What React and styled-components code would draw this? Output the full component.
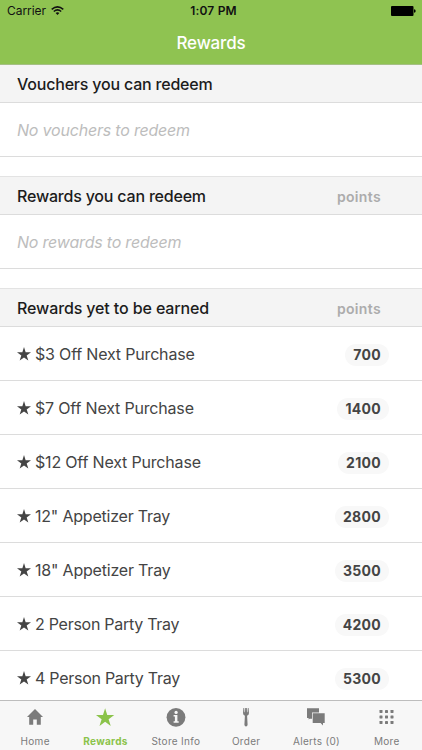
import styled, { createGlobalStyle } from "styled-components";

const GlobalStyle = createGlobalStyle`
  * {
    box-sizing: border-box;
  }

  body {
    margin: 0;
    overflow: hidden;
    background: #fff;
    font-family: Inter, "Liberation Sans", sans-serif;
  }
`;

const Screen = styled.div`
  display: flex;
  flex-direction: column;
  width: 422px;
  height: 750px;
  overflow: hidden;
  background: #fff;
`;

const Header = styled.header`
  flex: none;
  height: 65px;
  background: #8fc351;
  border-bottom: 1px solid #a5bf84;
`;

const StatusBar = styled.div`
  display: grid;
  grid-template-columns: 1fr auto 1fr;
  align-items: center;
  height: 22px;
  padding: 0 6px 0 7px;
  color: #111;
  font-size: 12px;
  line-height: 22px;
`;

const Carrier = styled.div`
  display: flex;
  align-items: center;
  gap: 5px;
  letter-spacing: -0.05px;
`;

const Clock = styled.div`
  padding-left: 4px;
  font-weight: 600;
  letter-spacing: 0.2px;
`;

const Battery = styled.svg`
  justify-self: end;
`;

const Title = styled.h1`
  margin: 0;
  color: #fff;
  font-size: 17px;
  font-weight: 500;
  line-height: 43px;
  letter-spacing: -0.15px;
  text-align: center;
`;

const Content = styled.main`
  flex: 1;
  min-height: 0;
  overflow: hidden;
`;

const Section = styled.section`
  margin-bottom: 19px;
`;

const SectionHead = styled.div`
  display: flex;
  align-items: center;
  justify-content: space-between;
  height: ${({ $first }) => ($first ? 38 : 39)}px;
  padding: 0 41px 0 17px;
  background: #f4f4f4;
  border-top: ${({ $first }) => ($first ? "none" : "1px solid #e3e3e3")};
  border-bottom: 1px solid #dcdcdc;
`;

const SectionTitle = styled.h2`
  margin: 0;
  color: #1c1c1c;
  font-size: 16px;
  font-weight: 500;
  letter-spacing: ${({ $spacing }) => $spacing || -0.2}px;
`;

const PointsLabel = styled.span`
  padding-top: 2px;
  color: #acacac;
  font-size: 14px;
  font-weight: 600;
  letter-spacing: 0.35px;
`;

const Row = styled.div`
  display: flex;
  align-items: center;
  height: 54px;
  padding: 0 33px 0 17px;
  border-bottom: 1px solid #dcdcdc;
  color: #444;
  font-size: 16px;
`;

const Empty = styled.span`
  color: #bdbdbd;
  font-style: italic;
  letter-spacing: -0.2px;
`;

const RewardStar = styled.svg`
  flex: none;
  margin-right: 4px;
  fill: #444;
`;

const RewardName = styled.span`
  flex: 1;
  letter-spacing: ${({ $spacing }) => $spacing || -0.18}px;
`;

const Points = styled.span`
  height: 22px;
  margin-top: 2px;
  padding: 0 8px;
  border-radius: 11px;
  background: #f8f8f8;
  color: #444;
  font-size: 14px;
  font-weight: 700;
  line-height: 22px;
  letter-spacing: 0.3px;
`;

const TabBar = styled.nav`
  display: grid;
  flex: none;
  grid-template-columns: repeat(6, 1fr);
  height: 50px;
  background: #f7f7f7;
  border-top: 1px solid #bdbdbd;
`;

const Tab = styled.a`
  display: flex;
  flex-direction: column;
  align-items: center;
  padding-top: 5px;
  color: ${({ $active }) => ($active ? "#8bc34a" : "#7b7b7b")};
  font-size: 10px;
  font-weight: ${({ $active }) => ($active ? 700 : 400)};
  line-height: 14px;
  letter-spacing: 0.3px;
  white-space: nowrap;
`;

const TabIcon = styled.svg`
  display: block;
  margin-bottom: 6px;
  fill: currentColor;
`;

const STAR =
  "M12 0 L14.8 8.9 H24 L16.6 14.4 L19.4 23.2 L12 17.8 L4.6 23.2 L7.4 14.4 L0 8.9 H9.2 Z";

const rewards = [
  { name: "$3 Off Next Purchase", points: 700 },
  { name: "$7 Off Next Purchase", points: 1400 },
  { name: "$12 Off Next Purchase", points: 2100 },
  { name: '12" Appetizer Tray', points: 2800, spacing: -0.21 },
  { name: '18" Appetizer Tray', points: 3500, spacing: -0.2 },
  { name: "2 Person Party Tray", points: 4200, spacing: -0.27 },
  { name: "4 Person Party Tray", points: 5300, spacing: -0.27 },
];

const tabs = [
  {
    label: "Home",
    icon: <path d="M11 3 L19 11 H16.8 V18.8 H12.8 V13.6 H9.2 V18.8 H5.2 V11 H3 Z" />,
  },
  {
    label: "Rewards",
    active: true,
    icon: <path d={STAR} transform="translate(2 2.3) scale(0.76)" />,
  },
  {
    label: "Store Info",
    icon: (
      <>
        <circle cx="11" cy="11.3" r="9.4" />
        <circle cx="11.1" cy="6.4" r="1.6" fill="#f7f7f7" />
        <path d="M8.6 9.1 H12.4 V15.3 H13.7 V16.7 H8.6 V15.3 H9.9 V10.5 H8.6 Z" fill="#f7f7f7" />
      </>
    ),
  },
  {
    label: "Order",
    icon: (
      <path d="M8.4 2 H9.2 L9.5 6.2 H10 L10.2 2 H11.8 L12 6.2 H12.5 L12.8 2 H13.6 L14 7 Q14 9 12.1 9.8 L12.6 18.8 Q12.4 20.4 11 20.4 Q9.6 20.4 9.4 18.8 L9.9 9.8 Q8 9 8 7 Z" />
    ),
  },
  {
    label: "Alerts (0)",
    icon: (
      <>
        <path d="M2 2.2 H14 V6.5 H7 V12.8 H4.6 L3.6 13.4 V12 H2 Z" />
        <path d="M7.7 7.3 H19.7 V17 H18 V19.4 L15.6 17 H7.7 Z" />
      </>
    ),
  },
  {
    label: "More",
    icon: [4, 9.5, 15].map((y) =>
      [4, 9.5, 15].map((x) => (
        <rect key={`${x}-${y}`} x={x - 0.5} y={y} width="3" height="3" rx="0.4" />
      ))
    ),
  },
];

export default function App() {
  return (
    <Screen>
      <GlobalStyle />
      <Header>
        <StatusBar>
          <Carrier>
            Carrier
            <svg width="13" height="10" viewBox="0 0 13 10" fill="none" stroke="#111">
              <path d="M0.7 3.4 Q6.5 -1.7 12.3 3.4" strokeWidth="1.5" />
              <path d="M2.8 5.5 Q6.5 2.3 10.2 5.5" strokeWidth="1.5" />
              <path d="M4.6 7 Q6.5 5.5 8.4 7 L6.5 9.1 Z" fill="#111" stroke="none" />
            </svg>
          </Carrier>
          <Clock>1:07 PM</Clock>
          <Battery width="25" height="10" viewBox="0 0 25 10">
            <rect width="22.5" height="10" rx="1" />
            <path d="M23 3.3 Q24.7 3.5 24.7 5 Q24.7 6.5 23 6.7 Z" />
          </Battery>
        </StatusBar>
        <Title>Rewards</Title>
      </Header>

      <Content>
        <Section>
          <SectionHead $first>
            <SectionTitle>Vouchers you can redeem</SectionTitle>
          </SectionHead>
          <Row>
            <Empty>No vouchers to redeem</Empty>
          </Row>
        </Section>

        <Section>
          <SectionHead>
            <SectionTitle>Rewards you can redeem</SectionTitle>
            <PointsLabel>points</PointsLabel>
          </SectionHead>
          <Row>
            <Empty>No rewards to redeem</Empty>
          </Row>
        </Section>

        <Section>
          <SectionHead>
            <SectionTitle $spacing={-0.12}>Rewards yet to be earned</SectionTitle>
            <PointsLabel>points</PointsLabel>
          </SectionHead>
          {rewards.map((reward) => (
            <Row key={reward.name}>
              <RewardStar width="14" height="14" viewBox="0 0 24 24">
                <path d={STAR} />
              </RewardStar>
              <RewardName $spacing={reward.spacing}>{reward.name}</RewardName>
              <Points>{reward.points}</Points>
            </Row>
          ))}
        </Section>
      </Content>

      <TabBar>
        {tabs.map((tab) => (
          <Tab key={tab.label} $active={tab.active}>
            <TabIcon width="22" height="22" viewBox="0 0 22 22">
              {tab.icon}
            </TabIcon>
            {tab.label}
          </Tab>
        ))}
      </TabBar>
    </Screen>
  );
}
